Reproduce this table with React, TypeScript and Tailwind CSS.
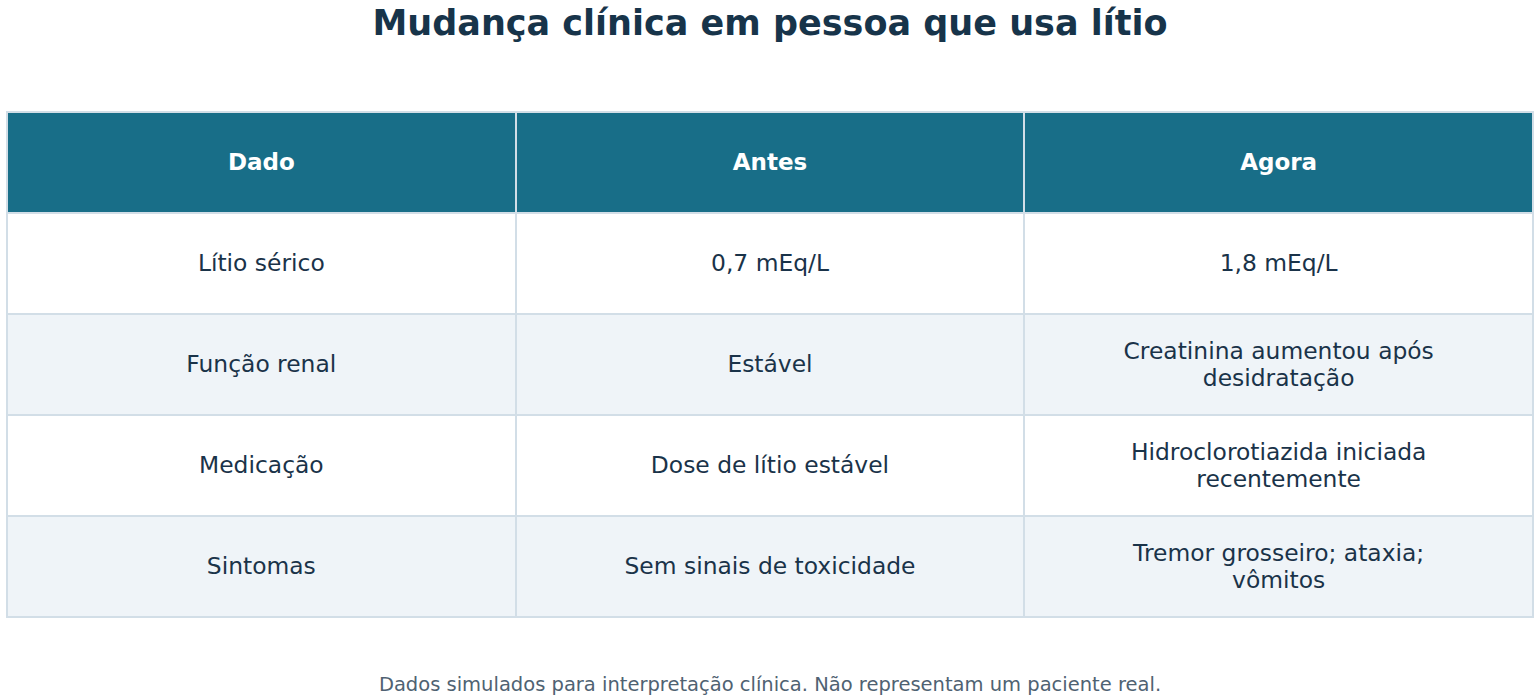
import React from "react";

const rows = [
  ["Lítio sérico", "0,7 mEq/L", "1,8 mEq/L"],
  ["Função renal", "Estável", "Creatinina aumentou após desidratação"],
  ["Medicação", "Dose de lítio estável", "Hidroclorotiazida iniciada recentemente"],
  ["Sintomas", "Sem sinais de toxicidade", "Tremor grosseiro; ataxia; vômitos"],
];

const App: React.FC = () => {
  return (
    <div
      className="h-[700px] w-[1540px] overflow-hidden bg-white"
      style={{ fontFamily: '"DejaVu Sans", Verdana, sans-serif' }}
    >
      <h1 className="h-[46px] text-center text-[35px] font-bold leading-[46px] text-[#17344a]">
        Mudança clínica em pessoa que usa lítio
      </h1>

      <table className="ml-[6px] mt-[65px] w-[1528px] table-fixed border-collapse border-2 border-[#d2dee7]">
        <thead>
          <tr className="h-[101px] bg-[#186e88]">
            {["Dado", "Antes", "Agora"].map((h) => (
              <th
                key={h}
                className="border-2 border-[#d2dee7] text-center text-[23px] font-bold text-white"
              >
                {h}
              </th>
            ))}
          </tr>
        </thead>
        <tbody>
          {rows.map((r, i) => (
            <tr
              key={r[0]}
              className={i % 2 === 0 ? "h-[101px] bg-white" : "h-[101px] bg-[#eff4f8]"}
            >
              {r.map((c) => (
                <td
                  key={c}
                  className="border-2 border-[#d2dee7] px-[80px] text-center text-[23.4px] leading-[27px] text-[#1a3349]"
                >
                  {c}
                </td>
              ))}
            </tr>
          ))}
        </tbody>
      </table>

      <p className="mt-[55px] text-center text-[19.5px] leading-[24px] text-[#4f6272]">
        Dados simulados para interpretação clínica. Não representam um paciente real.
      </p>
    </div>
  );
};

export default App;
